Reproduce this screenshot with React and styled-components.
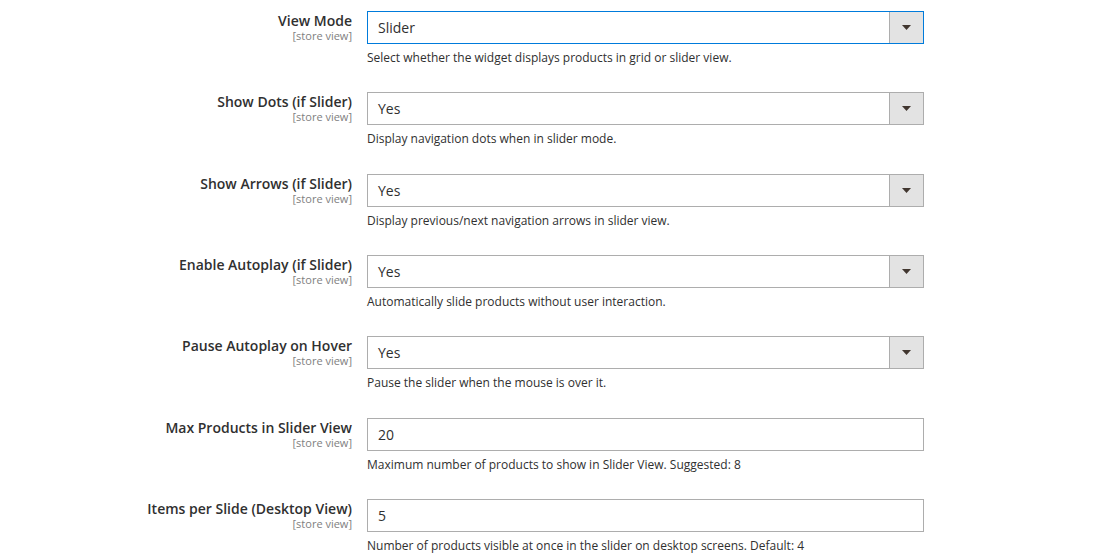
import React from "react";
import styled, { createGlobalStyle } from "styled-components";

const Global = createGlobalStyle`
  html, body { margin: 0; padding: 0; background: #fff; }
  body { font-family: "Open Sans", "Noto Sans", sans-serif; color: #303030; }
`;

const Page = styled.div`
  padding-top: 11px;
  display: flex;
  flex-direction: column;
`;

const Field = styled.div`
  display: grid;
  grid-template-columns: 352px 557px;
  column-gap: 15px;
  margin-bottom: 25.33px;
`;

const LabelCol = styled.div`
  display: flex;
  flex-direction: column;
  align-items: flex-end;
  text-align: right;
`;

const Label = styled.span`
  font-size: 14px;
  font-weight: 600;
  line-height: 19px;
  color: #303030;
`;

const Scope = styled.span`
  font-size: 11px;
  line-height: 11px;
  color: #808080;
`;

const Control = styled.div`
  display: flex;
  flex-direction: column;
`;

const Box = styled.div`
  box-sizing: border-box;
  height: 33px;
  border: 1px solid ${(p) => (p.$focused ? "#007bdb" : "#adadad")};
  background: #fff;
  display: flex;
  align-items: stretch;
`;

const Value = styled.span`
  flex: 1;
  padding: 0 10px;
  font-size: 14px;
  line-height: 31px;
  color: #303030;
`;

const ArrowCell = styled.span`
  width: 33px;
  border-left: 1px solid #adadad;
  background: #e3e3e3;
  display: flex;
  align-items: center;
  justify-content: center;
`;

const Note = styled.div`
  margin-top: 5px;
  font-size: 12px;
  line-height: 18px;
  color: #303030;
`;

const Arrow = () => (
  <svg width="9" height="5" viewBox="0 0 9 5">
    <path d="M0 0H9L4.5 5Z" fill="#41362f" />
  </svg>
);

const fields = [
  { label: "View Mode", value: "Slider", select: true, focused: true, note: "Select whether the widget displays products in grid or slider view." },
  { label: "Show Dots (if Slider)", value: "Yes", select: true, note: "Display navigation dots when in slider mode." },
  { label: "Show Arrows (if Slider)", value: "Yes", select: true, note: "Display previous/next navigation arrows in slider view." },
  { label: "Enable Autoplay (if Slider)", value: "Yes", select: true, note: "Automatically slide products without user interaction." },
  { label: "Pause Autoplay on Hover", value: "Yes", select: true, note: "Pause the slider when the mouse is over it." },
  { label: "Max Products in Slider View", value: "20", note: "Maximum number of products to show in Slider View. Suggested: 8" },
  { label: "Items per Slide (Desktop View)", value: "5", note: "Number of products visible at once in the slider on desktop screens. Default: 4" },
];

export default function App() {
  return (
    <>
      <Global />
      <Page>
        {fields.map((f) => (
          <Field key={f.label}>
            <LabelCol>
              <Label>{f.label}</Label>
              <Scope>[store view]</Scope>
            </LabelCol>
            <Control>
              <Box $focused={f.focused}>
                <Value>{f.value}</Value>
                {f.select && (
                  <ArrowCell>
                    <Arrow />
                  </ArrowCell>
                )}
              </Box>
              <Note>{f.note}</Note>
            </Control>
          </Field>
        ))}
      </Page>
    </>
  );
}
